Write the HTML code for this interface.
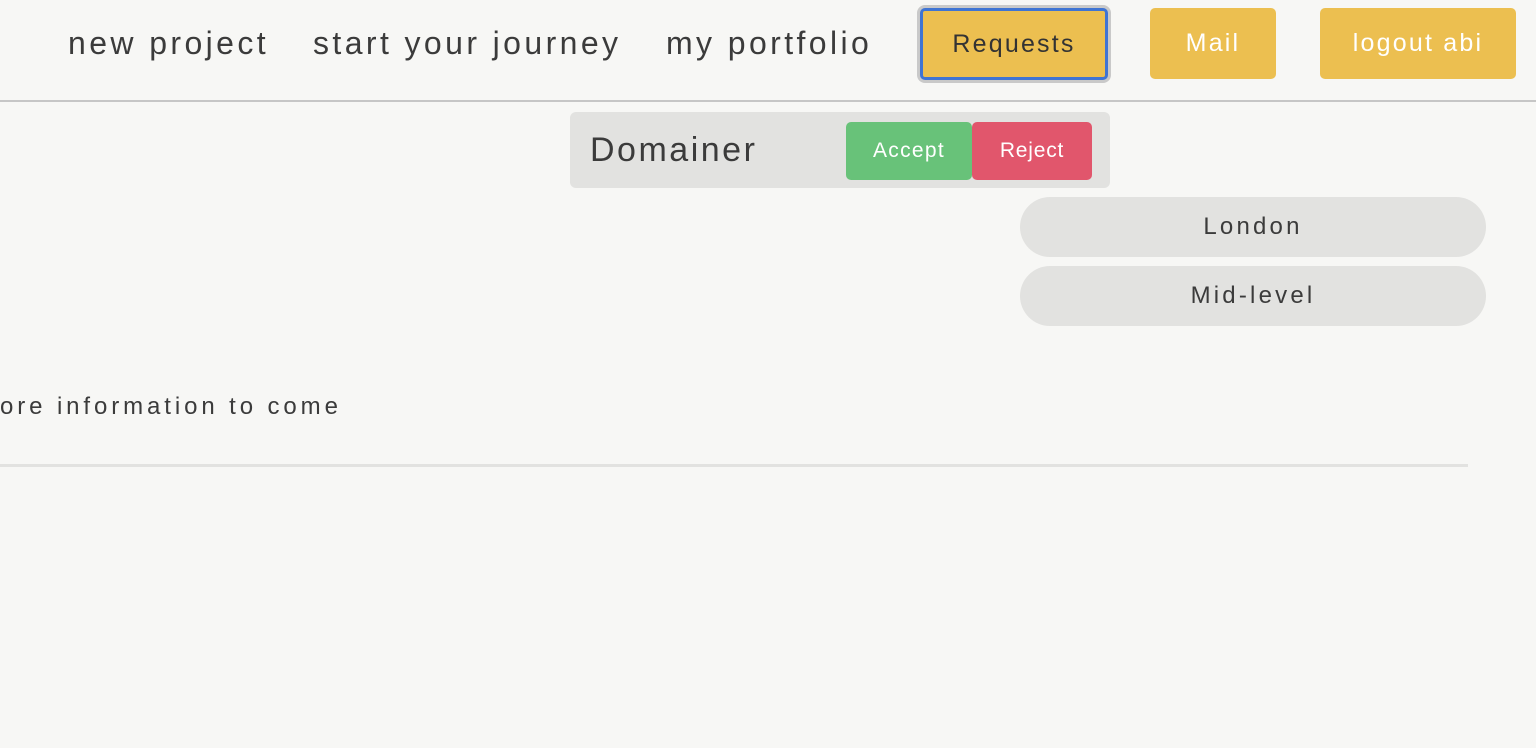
<!DOCTYPE html>
<html><head><style>
*{margin:0;padding:0;box-sizing:border-box}
body{width:1536px;height:748px;background:#f7f7f5;font-family:"Liberation Sans",sans-serif;color:#3b3b3b;position:relative;overflow:hidden;letter-spacing:0.5px}
.a{position:absolute}
.nav{font-size:32px;top:25px;letter-spacing:3.4px}
.btn{position:absolute;background:#ecbf50;border-radius:5px;font-size:25px;display:flex;align-items:center;justify-content:center;color:#fff;letter-spacing:2.2px}
.pill{position:absolute;left:1020px;width:466px;height:60px;border-radius:30px;background:#e2e2e0;font-size:24px;display:flex;align-items:center;justify-content:center;letter-spacing:3.2px}
</style></head><body>
<div class="a nav" style="left:68px">new project</div>
<div class="a nav" style="left:313px">start your journey</div>
<div class="a nav" style="left:666px">my portfolio</div>
<div class="a" style="left:917px;top:5px;width:194px;height:78px;border-radius:8px;background:#c9c9c9"></div>
<div class="btn" style="left:920px;top:8px;width:188px;height:72px;border:3px solid #3f74d3;color:#333">Requests</div>
<div class="btn" style="left:1150px;top:8px;width:126px;height:71px">Mail</div>
<div class="btn" style="left:1320px;top:8px;width:196px;height:71px">logout abi</div>
<div class="a" style="left:0;top:100px;width:1536px;height:2px;background:#c6c6c6"></div>
<div class="a" style="left:570px;top:112px;width:540px;height:76px;border-radius:6px;background:#e2e2e0"></div>
<div class="a" style="left:590px;top:131px;font-size:34px;letter-spacing:2.5px">Domainer</div>
<div class="btn" style="left:846px;top:122px;width:126px;height:58px;background:#68c279;font-size:21px;letter-spacing:1.3px">Accept</div>
<div class="btn" style="left:972px;top:122px;width:120px;height:58px;background:#e1566c;font-size:21px;letter-spacing:0.8px">Reject</div>
<div class="pill" style="top:197px">London</div>
<div class="pill" style="top:266px">Mid-level</div>
<div class="a" style="left:0;top:393px;font-size:24px;letter-spacing:3.9px">ore information to come</div>
<div class="a" style="left:0;top:464px;width:1468px;height:3px;background:#e2e2e0"></div>
</body></html>
